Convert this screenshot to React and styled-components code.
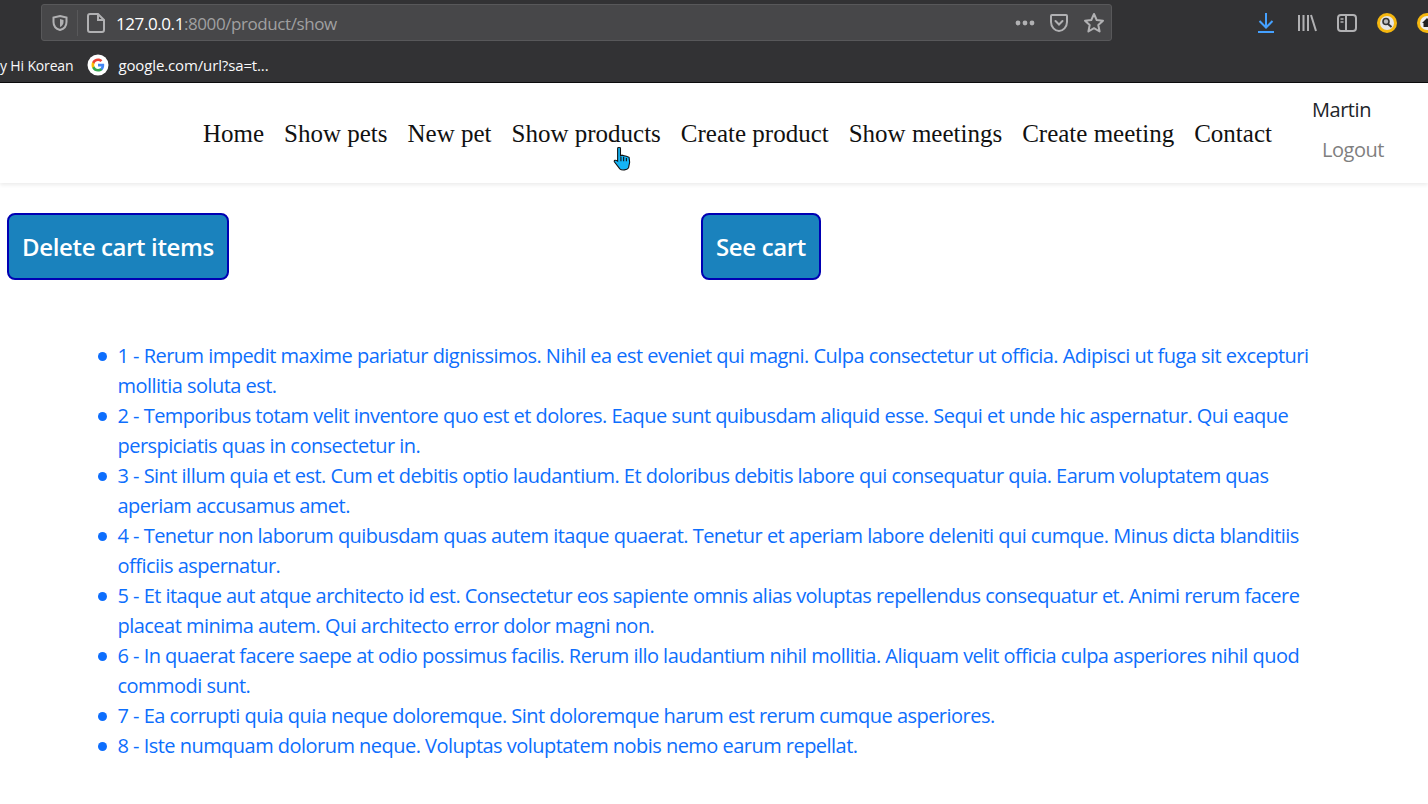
import React from 'react';
import styled, { createGlobalStyle } from 'styled-components';

const UI_FONT = '"Open Sans", "Noto Sans", sans-serif';

const GlobalStyle = createGlobalStyle`
  html, body {
    margin: 0;
    padding: 0;
    background: #fff;
    overflow: hidden;
  }
`;

const Page = styled.div`
  position: relative;
  width: 1428px;
  height: 804px;
  overflow: hidden;
  font-family: ${UI_FONT};
`;

const Chrome = styled.div`
  height: 82px;
  background: #323234;
  border-bottom: 1px solid #0c0c0d;
  overflow: hidden;
`;

const ToolRow = styled.div`
  display: flex;
  align-items: center;
  height: 37px;
  padding: 4px 0 0 41px;
`;

const UrlBar = styled.div`
  display: flex;
  align-items: center;
  box-sizing: border-box;
  width: 1071px;
  height: 37px;
  padding: 0 6px 0 9px;
  background: #474749;
  border: 1px solid #58585a;
  border-radius: 3px;
  flex-shrink: 0;
`;

const Divider = styled.span`
  width: 1px;
  height: 26px;
  margin: 0 8px;
  background: #58585a;
`;

const Url = styled.div`
  flex: 1;
  margin-left: 10px;
  padding-top: 1px;
  font-size: 17px;
  letter-spacing: -0.42px;
  color: #a0a0a1;
  white-space: nowrap;
`;

const Host = styled.span`
  color: #fff;
`;

const UrlActions = styled.div`
  display: flex;
  align-items: center;
  gap: 14px;
`;

const ToolIcons = styled.div`
  display: flex;
  align-items: center;
  gap: 20px;
  margin-left: 146px;
  flex-shrink: 0;
`;

const BookmarkRow = styled.div`
  display: flex;
  align-items: center;
  height: 28px;
  margin-top: 10px;
  font-size: 15px;
  letter-spacing: -0.13px;
  color: #f9f9fa;
  white-space: nowrap;
`;

const BookmarkFolder = styled.span`
  font-size: 14px;
  letter-spacing: -0.15px;
`;

const Bookmark = styled.span`
  display: flex;
  align-items: center;
  gap: 9px;
  margin-left: 14px;
`;

const Navbar = styled.nav`
  position: relative;
  display: flex;
  align-items: center;
  justify-content: flex-end;
  box-sizing: border-box;
  height: 100px;
  padding-right: 44px;
  background: #fff;
  box-shadow: 0 2px 4px rgba(0, 0, 0, 0.08);
`;

const NavLinks = styled.div`
  display: flex;
  gap: 20px;
  margin: 1px 40px 0 0;
  font-family: "Liberation Serif", serif;
  font-size: 25px;
  color: #111;
`;

const NavLink = styled.a`
  white-space: nowrap;
`;

const UserMenu = styled.div`
  display: flex;
  flex-direction: column;
  gap: 10px;
  margin-bottom: 6px;
  font-size: 20px;
  line-height: 30px;
  letter-spacing: -0.45px;
`;

const UserName = styled.span`
  color: #212529;
`;

const Logout = styled.a`
  padding-left: 10px;
  color: #7f7f7f;
`;

const ButtonRow = styled.div`
  display: grid;
  grid-template-columns: 694px 1fr;
  padding: 30px 0 0 7px;
`;

const CartButton = styled.button`
  justify-self: start;
  box-sizing: border-box;
  height: 67px;
  padding: 0 13px;
  background: #1a82bd;
  border: 2px solid #0000b3;
  border-radius: 8px;
  font-family: ${UI_FONT};
  font-size: 24px;
  font-weight: 600;
  letter-spacing: -0.36px;
  color: #fff;
`;

const ProductList = styled.ul`
  margin: 61px 0 0;
  padding: 0 100px 0 117.5px;
  list-style: none;
  font-size: 20px;
  line-height: 30px;
  letter-spacing: -0.53px;
  color: #0d6efd;
`;

const ProductItem = styled.li`
  position: relative;

  &::before {
    content: '';
    position: absolute;
    left: -19.5px;
    top: 10.5px;
    width: 9px;
    height: 9px;
    border-radius: 50%;
    background: #0d6efd;
  }
`;

const Cursor = styled.svg`
  position: absolute;
  left: 613px;
  top: 147px;
`;

const Sicon = ({ children, w = 20, h = 20 }) => (
  <svg width={w} height={h} viewBox={`0 0 ${w} ${h}`} fill="none" stroke="#b1b1b3" strokeWidth="2">
    {children}
  </svg>
);

const ShieldIcon = () => (
  <Sicon w={18} h={18}>
    <path d="M9 2 L15.5 3.5 V8 C15.5 12 12.5 15 9 16 C5.5 15 2.5 12 2.5 8 V3.5 Z" />
    <path d="M9 5 L12.5 6 V8 C12.5 10.5 11 12 9 13 Z" fill="#b1b1b3" stroke="none" />
  </Sicon>
);

const PageIcon = () => (
  <Sicon w={20} h={22}>
    <path d="M4 2 H12 L18 8 V18 a2 2 0 0 1 -2 2 H4 a2 2 0 0 1 -2 -2 V4 a2 2 0 0 1 2 -2 Z" />
    <path d="M12 2 V8 H18" />
  </Sicon>
);

const DotsIcon = () => (
  <svg width="20" height="6" viewBox="0 0 20 6" fill="#b1b1b3">
    <circle cx="3" cy="3" r="2.4" />
    <circle cx="10" cy="3" r="2.4" />
    <circle cx="17" cy="3" r="2.4" />
  </svg>
);

const PocketIcon = () => (
  <Sicon w={20} h={20}>
    <path d="M3 2 H17 a1 1 0 0 1 1 1 V9 C18 14 14 18 10 18 C6 18 2 14 2 9 V3 a1 1 0 0 1 1 -1 Z" />
    <path d="M6.5 8 L10 11.5 L13.5 8" strokeLinecap="round" />
  </Sicon>
);

const StarIcon = () => (
  <Sicon w={22} h={22}>
    <path d="M11 2 L13.7 8 L20 8.7 L15.3 13 L16.6 19.5 L11 16.2 L5.4 19.5 L6.7 13 L2 8.7 L8.3 8 Z" strokeLinejoin="round" />
  </Sicon>
);

const DownloadIcon = () => (
  <svg width="19" height="22" viewBox="0 0 19 22" fill="none" stroke="#45a1ff" strokeWidth="2">
    <path d="M8 1 V15" />
    <path d="M1.5 9 L8 15.5 L14.5 9" />
    <path d="M0 20 H16" />
  </svg>
);

const LibraryIcon = () => (
  <Sicon w={20} h={18}>
    <path d="M2 1 V17 M6.5 1 V17 M11 1 V17 M14 1 L19 17" />
  </Sicon>
);

const SidebarIcon = () => (
  <Sicon w={20} h={18}>
    <rect x="1" y="1" width="18" height="16" rx="3" />
    <path d="M9 1 V17" />
    <path d="M3.5 5 H6.5 M3.5 8 H6.5" strokeWidth="1.5" />
  </Sicon>
);

const SearchExtension = () => (
  <svg width="20" height="20" viewBox="0 0 20 20">
    <circle cx="10" cy="10" r="10" fill="#f5b70f" />
    <circle cx="10" cy="10" r="7" fill="#e6e6e6" />
    <circle cx="9" cy="8.5" r="3" fill="#bbb" stroke="#333" strokeWidth="1.6" />
    <path d="M11 11 L14.5 14" stroke="#333" strokeWidth="2" />
  </svg>
);

const HomeExtension = () => (
  <svg width="20" height="20" viewBox="0 0 20 20">
    <circle cx="10" cy="10" r="10" fill="#f5b70f" />
    <circle cx="10" cy="10" r="7" fill="#eee" />
    <path d="M10 5 L15 10 H13.5 V14 H6.5 V10 H5 Z" fill="#222" />
  </svg>
);

const GoogleLogo = () => (
  <svg width="22" height="22" viewBox="0 0 22 22">
    <circle cx="11" cy="11" r="10.5" fill="#fff" />
    <path d="M17.2 11.2c0-.5 0-1-.1-1.4H11v2.7h3.5c-.2.8-.6 1.5-1.3 2v1.7h2.1c1.2-1.2 1.9-2.9 1.9-5z" fill="#4285f4" />
    <path d="M11 17.5c1.8 0 3.2-.6 4.3-1.6l-2.1-1.7c-.6.4-1.3.7-2.2.7-1.7 0-3.1-1.1-3.6-2.7H5.2v1.7c1.1 2.2 3.3 3.6 5.8 3.6z" fill="#34a853" />
    <path d="M7.4 12.2c-.3-.8-.3-1.6 0-2.4V8.1H5.2c-.9 1.8-.9 4 0 5.8z" fill="#fbbc05" />
    <path d="M11 7.1c1 0 1.8.3 2.5 1l1.9-1.9C14.2 5.1 12.7 4.5 11 4.5c-2.5 0-4.7 1.4-5.8 3.6l2.2 1.7c.5-1.6 1.9-2.7 3.6-2.7z" fill="#ea4335" />
  </svg>
);

const HandCursor = () => (
  <Cursor width="18" height="24" viewBox="0 0 16 22">
    <path
      d="M4 1.5 a1.3 1.3 0 0 1 2.6 0 V8 L8 7.5 L10 8 L12 8.5 L14.5 9.5 L15 14 L14 19 C13 21 8 22 6 20 L1 13.5 C0.5 12 2 11.5 4 13 Z"
      fill="#14b4f5"
      stroke="#111"
      strokeWidth="1"
    />
    <path d="M7 9 V13 M9.5 9 V13 M12 10 V13" stroke="#111" strokeWidth="1" />
  </Cursor>
);

const navItems = [
  'Home',
  'Show pets',
  'New pet',
  'Show products',
  'Create product',
  'Show meetings',
  'Create meeting',
  'Contact',
];

const products = [
  '1 - Rerum impedit maxime pariatur dignissimos. Nihil ea est eveniet qui magni. Culpa consectetur ut officia. Adipisci ut fuga sit excepturi mollitia soluta est.',
  '2 - Temporibus totam velit inventore quo est et dolores. Eaque sunt quibusdam aliquid esse. Sequi et unde hic aspernatur. Qui eaque perspiciatis quas in consectetur in.',
  '3 - Sint illum quia et est. Cum et debitis optio laudantium. Et doloribus debitis labore qui consequatur quia. Earum voluptatem quas aperiam accusamus amet.',
  '4 - Tenetur non laborum quibusdam quas autem itaque quaerat. Tenetur et aperiam labore deleniti qui cumque. Minus dicta blanditiis officiis aspernatur.',
  '5 - Et itaque aut atque architecto id est. Consectetur eos sapiente omnis alias voluptas repellendus consequatur et. Animi rerum facere placeat minima autem. Qui architecto error dolor magni non.',
  '6 - In quaerat facere saepe at odio possimus facilis. Rerum illo laudantium nihil mollitia. Aliquam velit officia culpa asperiores nihil quod commodi sunt.',
  '7 - Ea corrupti quia quia neque doloremque. Sint doloremque harum est rerum cumque asperiores.',
  '8 - Iste numquam dolorum neque. Voluptas voluptatem nobis nemo earum repellat.',
];

const App = () => (
  <Page>
    <GlobalStyle />
    <Chrome>
      <ToolRow>
        <UrlBar>
          <ShieldIcon />
          <Divider />
          <PageIcon />
          <Url>
            <Host>127.0.0.1</Host>:8000/product/show
          </Url>
          <UrlActions>
            <DotsIcon />
            <PocketIcon />
            <StarIcon />
          </UrlActions>
        </UrlBar>
        <ToolIcons>
          <DownloadIcon />
          <LibraryIcon />
          <SidebarIcon />
          <SearchExtension />
          <HomeExtension />
        </ToolIcons>
      </ToolRow>
      <BookmarkRow>
        <BookmarkFolder>y Hi Korean</BookmarkFolder>
        <Bookmark>
          <GoogleLogo />
          google.com/url?sa=t...
        </Bookmark>
      </BookmarkRow>
    </Chrome>
    <Navbar>
      <NavLinks>
        {navItems.map((item) => (
          <NavLink key={item}>{item}</NavLink>
        ))}
      </NavLinks>
      <UserMenu>
        <UserName>Martin</UserName>
        <Logout>Logout</Logout>
      </UserMenu>
    </Navbar>
    <ButtonRow>
      <CartButton>Delete cart items</CartButton>
      <CartButton>See cart</CartButton>
    </ButtonRow>
    <ProductList>
      {products.map((text) => (
        <ProductItem key={text}>{text}</ProductItem>
      ))}
    </ProductList>
    <HandCursor />
  </Page>
);

export default App;
